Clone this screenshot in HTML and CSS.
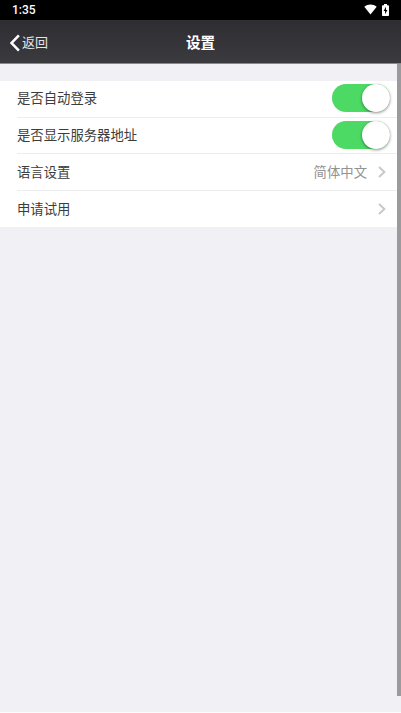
FILE: index.html
```html
<!DOCTYPE html>
<html lang="zh-CN">
<head>
  <meta charset="UTF-8" />
  <meta name="viewport" content="width=device-width, initial-scale=1.0" />
  <title>设置</title>
  <link rel="stylesheet" href="styles.css">
</head>
<body>
  <div class="status-bar">
    <span class="time">1:35</span>
    <div class="status-icons">
      <svg class="wifi" width="13" height="11" viewBox="0 0 13 11"><path d="M0.3 2.7C4 -0.3 9 -0.3 12.7 2.7L6.5 10.6Z" fill="#fff"/></svg>
      <svg class="battery" width="7" height="12" viewBox="0 0 7 12"><path d="M2 0H5V1.2H6.2Q7 1.2 7 2V11.2Q7 12 6.2 12H0.8Q0 12 0 11.2V2Q0 1.2 0.8 1.2H2Z" fill="#fff"/><path d="M4 2.8L1.6 7H3.1V10.2L5.4 5.9H4Z" fill="#000"/></svg>
    </div>
  </div>

  <header class="navbar">
    <a class="back">
      <svg width="10" height="18" viewBox="0 0 10 18"><path d="M8.9 1.4L1.6 9L8.9 16.6" fill="none" stroke="#fff" stroke-width="2.5"/></svg>
      <span>返回</span>
    </a>
    <h1>设置</h1>
  </header>

  <main class="content">
    <ul class="list">
      <li class="row">
        <span class="label">是否自动登录</span>
        <span class="switch"></span>
      </li>
      <li class="row">
        <span class="label">是否显示服务器地址</span>
        <span class="switch"></span>
      </li>
      <li class="row">
        <span class="label">语言设置</span>
        <span class="value">简体中文</span>
        <svg class="arrow" width="8" height="12" viewBox="0 0 8 12"><path d="M1 1L6.4 6L1 11" fill="none" stroke="#c7c7cc" stroke-width="1.9"/></svg>
      </li>
      <li class="row">
        <span class="label">申请试用</span>
        <svg class="arrow" width="8" height="12" viewBox="0 0 8 12"><path d="M1 1L6.4 6L1 11" fill="none" stroke="#c7c7cc" stroke-width="1.9"/></svg>
      </li>
    </ul>
    <div class="scrollbar"></div>
  </main>
</body>
</html>
```
FILE: styles.css
```css
* {
  box-sizing: border-box;
}
body {
  margin: 0;
  height: 100vh;
  display: flex;
  flex-direction: column;
  overflow: hidden;
  font-family: Roboto, 'Noto Sans CJK SC', sans-serif;
  font-size: 13.35px;
  color: #3c3c3c;
  background: #f0f0f5;
}
.status-bar {
  flex: none;
  display: flex;
  align-items: center;
  justify-content: space-between;
  height: 20px;
  padding: 0 12px;
  background: #000;
  color: #fff;
}
.time {
  font-size: 12px;
  font-weight: 500;
}
.status-icons {
  display: flex;
  align-items: center;
  gap: 5px;
  margin-top: -1px;
}
.navbar {
  flex: none;
  display: grid;
  grid-template-columns: 1fr auto 1fr;
  align-items: center;
  height: 44px;
  padding: 0 10px;
  border-bottom: 1px solid #88888b;
  background: linear-gradient(#2e2d32, #3b3a3f);
  color: #fff;
}
.back {
  display: flex;
  align-items: center;
  gap: 2px;
  padding-top: 2px;
  line-height: 20px;
}
.back span {
  margin-top: 1px;
  font-size: 13px;
  color: #e4e4e6;
}
h1 {
  margin: 2px 0 0;
  font-size: 14.6px;
  font-weight: 700;
  line-height: 20px;
}
.content {
  flex: 1;
  position: relative;
  padding-top: 17px;
  border-bottom: 1px solid #fbfbfc;
}
.list {
  margin: 0;
  padding: 0;
  list-style: none;
  background: #fff;
}
.row {
  display: flex;
  align-items: center;
  height: 36.7px;
  margin-left: 17px;
  padding: 1.2px 11px 0 0;
  border-bottom: 1px solid #ededf0;
  line-height: 20px;
}
.row:last-child {
  height: 36.4px;
  border-bottom: none;
}
.label {
  flex: 1;
}
.value {
  margin-right: 11px;
  color: #929292;
}
.arrow {
  margin: 0 4px 1px 0;
}
.switch {
  display: flex;
  justify-content: flex-end;
  width: 58px;
  height: 28px;
  margin-top: -2px;
  border-radius: 14px;
  background: #4cd964;
}
.switch::after {
  content: '';
  width: 28px;
  height: 28px;
  border-radius: 50%;
  background: #fff;
  box-shadow: 0 1px 3px rgba(0, 0, 0, 0.45);
}
/* overlay scroll indicator */
.scrollbar {
  position: absolute;
  top: 0;
  right: 0;
  width: 4px;
  height: 632px;
  background: #9b9b9e;
}
```
